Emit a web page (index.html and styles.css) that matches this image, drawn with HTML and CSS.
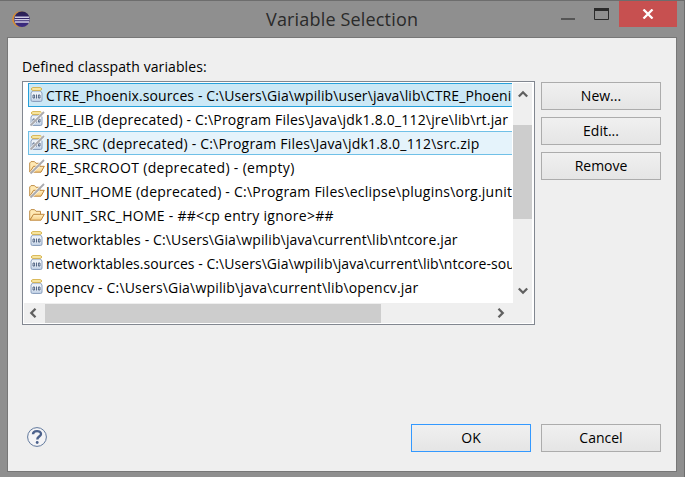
FILE: index.html
```html
<!DOCTYPE html>
<html lang="en">
<head>
<meta charset="utf-8">
<title>Variable Selection</title>
<link rel="stylesheet" href="styles.css">
</head>
<body>
<svg class="defs" aria-hidden="true">
  <defs>
    <linearGradient id="glass" x1="0" y1="0" x2="0" y2="1"><stop offset="0" stop-color="#e3ebf5"/><stop offset=".5" stop-color="#f5f8fc"/><stop offset="1" stop-color="#b5c8e0"/></linearGradient>
    <linearGradient id="fold" x1="0" y1="0" x2="0" y2="1"><stop offset="0" stop-color="#fff0c4"/><stop offset="1" stop-color="#f6cf86"/></linearGradient>
    <linearGradient id="orb" x1="0" y1="0" x2="0" y2="1"><stop offset="0" stop-color="#2a2050"/><stop offset="1" stop-color="#3d2c86"/></linearGradient>
    <symbol id="jar" viewBox="0 0 16 16">
      <path d="M3.500 4L2 6v7q0 1.500 1.500 1.500h8Q13 14.500 13 13V6l-1.500-2z" fill="url(#glass)" stroke="#8ba0be"/>
      <rect x="2.500" y=".7" width="10" height="2.600" rx="1.200" fill="#fff3b8" stroke="#d2ab3c"/>
      <path d="M4 8h1.600v3H4zM7.500 7.500v4M9.400 8H11v3H9.400z" fill="none" stroke="#43597a" stroke-width=".9"/>
    </symbol>
    <symbol id="folder" viewBox="0 0 16 16">
      <path d="M.7 13V4L2 2.600h3.500L7 4.300h4.500V8L5 7.500z" fill="#ffe9b4" stroke="#c0904c"/>
      <path d="M1 13.200L4.500 7.300h10.800l-3.300 5.900z" fill="url(#fold)" stroke="#c0883c"/>
    </symbol>
    <symbol id="slash" viewBox="0 0 16 16">
      <path d="M1.500 14.500L15 1" stroke="#fff" stroke-width="3.200" opacity=".7"/>
      <path d="M1.500 14.500L15 1" stroke="#aaaaae" stroke-width="1.800"/>
    </symbol>
  </defs>
</svg>
<div class="window">
  <header class="titlebar">
    <svg class="logo" viewBox="0 0 20 18"><circle cx="8.200" cy="8.300" r="8" fill="#dc8d2c"/><circle cx="9.700" cy="8.300" r="8" fill="#8f8378"/><circle cx="10" cy="8.300" r="7.800" fill="url(#orb)"/><path d="M3 6.200h14M2.500 8.600h15M3 11h14" stroke="#cfcbe2" stroke-width="1.400"/></svg>
    <h1>Variable Selection</h1>
    <div class="controls">
      <svg class="winicons" viewBox="0 0 58 26"><path d="M0 18h14" stroke="#555" stroke-width="2"/><path d="M33.500 9v9.500h14V9" fill="none" stroke="#2a2a2a"/><path d="M33 8.500h15" stroke="#2a2a2a" stroke-width="3"/></svg>
      <div class="close"><svg viewBox="0 0 12 10"><path d="M1.500.5l9 9M10.500.5l-9 9" stroke="#fff" stroke-width="2.300"/></svg></div>
    </div>
  </header>
  <main class="client">
    <div class="caption">Defined classpath variables:</div>
    <div class="content">
      <div class="list">
        <div class="upper">
          <ul class="rows">
            <li class="selected"><svg><use href="#jar"/></svg><span class="r1">CTRE_Phoenix.sources - C:\Users\Gia\wpilib\user\java\lib\CTRE_Phoeni</span></li>
            <li><svg><use href="#jar"/><use href="#slash"/></svg><span class="r2">JRE_LIB (deprecated) - C:\Program Files\Java\jdk1.8.0_112\jre\lib\rt.jar</span></li>
            <li class="hover"><svg><use href="#jar"/><use href="#slash"/></svg><span class="r3">JRE_SRC (deprecated) - C:\Program Files\Java\jdk1.8.0_112\src.zip</span></li>
            <li><svg><use href="#folder"/><use href="#slash"/></svg><span class="r4">JRE_SRCROOT (deprecated) - (empty)</span></li>
            <li><svg><use href="#folder"/><use href="#slash"/></svg><span class="r5">JUNIT_HOME (deprecated) - C:\Program Files\eclipse\plugins\org.junit</span></li>
            <li><svg><use href="#folder"/></svg><span class="r6">JUNIT_SRC_HOME - ##&lt;cp entry ignore&gt;##</span></li>
            <li><svg><use href="#jar"/></svg><span class="r7">networktables - C:\Users\Gia\wpilib\java\current\lib\ntcore.jar</span></li>
            <li><svg><use href="#jar"/></svg><span class="r8">networktables.sources - C:\Users\Gia\wpilib\java\current\lib\ntcore-sou</span></li>
            <li><svg><use href="#jar"/></svg><span class="r9">opencv - C:\Users\Gia\wpilib\java\current\lib\opencv.jar</span></li>
          </ul>
          <div class="vbar">
            <svg class="up" viewBox="0 0 10 8"><path d="M.8 6.500L5 2.300l4.200 4.200"/></svg>
            <div class="vthumb"></div>
            <svg class="down" viewBox="0 0 10 8"><path d="M.8 1.500L5 5.700l4.200-4.200"/></svg>
          </div>
        </div>
        <div class="hbar">
          <svg class="left" viewBox="0 0 8 10"><path d="M6.500.8L2.300 5l4.200 4.200"/></svg>
          <div class="hthumb"></div>
          <svg class="right" viewBox="0 0 8 10"><path d="M1.500.8L5.700 5 1.500 9.200"/></svg>
        </div>
      </div>
      <div class="side">
        <button>New...</button>
        <button>Edit...</button>
        <button>Remove</button>
      </div>
    </div>
    <footer>
      <svg class="help" viewBox="0 0 20 20"><circle cx="10" cy="10" r="9.400" fill="#f4f4f6" stroke="#60789c"/><path d="M6 7.200C6 3.200 14 3 14 7c0 2.600-3.700 2.600-3.700 5.400" fill="none" stroke="#4c618b" stroke-width="2.400"/><circle cx="10.200" cy="15.500" r="1.400" fill="#4c618b"/></svg>
      <div class="actions"><button class="ok">OK</button><button>Cancel</button></div>
    </footer>
  </main>
</div>
</body>
</html>
```
FILE: styles.css
```css
* { box-sizing: border-box; }
body { margin: 0; font: 14px/24px "Open Sans", "Noto Sans", sans-serif; color: #000; overflow: hidden; }
svg { display: block; flex: none; }
.defs { position: absolute; width: 0; height: 0; }
.window { width: 685px; height: 477px; padding: 0 7px; background: #8f8f8f; border-top: 1px solid #6d6d6d; border-right: 1px solid #6d6d6d; }
.titlebar { display: flex; height: 36px; }
.logo { width: 20px; height: 18px; margin: 10px 0 0 5px; }
h1 { flex: 1; margin: 0 0 0 234px; font-size: 18px; font-weight: 400; line-height: 36px; letter-spacing: .17px; color: #2a2a2a; white-space: nowrap; }
.controls { display: flex; }
.winicons { width: 58px; height: 26px; }
.close { width: 58px; height: 26px; background: #c75050; display: flex; justify-content: center; align-items: center; }
.close svg { width: 12px; height: 10px; }
.client { width: 670px; height: 435px; border: 1px solid #777; background: #efefef; padding: 18px 15px 0 14px; display: flex; flex-direction: column; }
.caption { height: 25px; line-height: 22px; letter-spacing: .1px; white-space: nowrap; }
.content { display: flex; gap: 6px; height: 244px; }
.list { width: 513px; height: 244px; border: 1px solid #828790; background: #fff; padding: 1px; }
.upper { display: flex; height: 220px; }
.rows { list-style: none; margin: 0; padding: 0 0 0 4px; width: 488px; overflow: hidden; }
.rows li { display: flex; width: 484px; height: 24px; white-space: nowrap; border: 1px solid transparent; border-right: 0; overflow: hidden; }
.rows svg { width: 16px; height: 16px; margin: 3px 1px 0 0; }
.rows span { line-height: 23px; }
.rows .selected { background: #cbe8f6; border-color: #26a0da; }
.rows .hover { background: #e5f3fb; border-color: #70c0e7; }
.r1 { letter-spacing: .1px; }
.r2 { letter-spacing: .19px; }
.r3 { letter-spacing: .2px; }
.r4 { letter-spacing: .33px; }
.r5 { letter-spacing: .23px; }
.r6 { letter-spacing: .27px; }
.r7 { letter-spacing: .13px; }
.r8 { letter-spacing: .05px; }
.r9 { letter-spacing: .18px; }
.vbar { width: 19px; margin-left: 1px; background: #efefef; }
.vthumb { height: 94px; background: #cdcdcd; }
.vbar svg { width: 10px; height: 8px; margin-left: 5px; }
.up { margin-top: 7px; margin-bottom: 27px; }
.down { margin-top: 68px; }
.vbar path, .hbar path { fill: none; stroke: #606060; stroke-width: 2.3; }
.hbar { display: flex; align-items: center; width: 508px; height: 20px; background: #efefef; }
.hbar svg { width: 8px; height: 10px; }
.left { margin: 0 8px 0 5px; }
.hthumb { width: 336px; height: 19px; background: #cdcdcd; }
.right { margin-left: 116px; }
.side { display: flex; flex-direction: column; gap: 7px; padding-top: 1px; }
button { width: 120px; height: 28px; padding: 0; border: 1px solid #acacac; background: linear-gradient(#f0f0f0, #e5e5e5); color: #000; font: inherit; line-height: 26px; }
footer { display: flex; justify-content: space-between; margin: 99px 0 0 5px; }
.help { width: 20px; height: 20px; margin-top: 3px; }
.actions { display: flex; gap: 10px; }
.ok { border-color: #3399ff; }
```
